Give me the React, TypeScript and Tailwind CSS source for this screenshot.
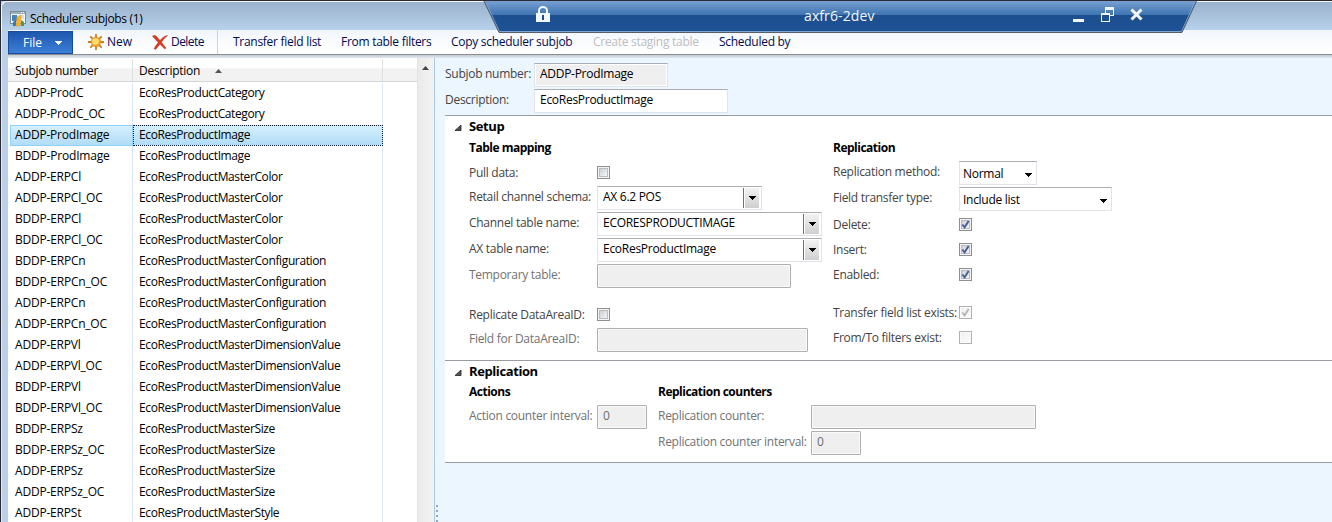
import React from "react";

const rows: [string, string][] = [
  ["ADDP-ProdC", "EcoResProductCategory"],
  ["ADDP-ProdC_OC", "EcoResProductCategory"],
  ["ADDP-ProdImage", "EcoResProductImage"],
  ["BDDP-ProdImage", "EcoResProductImage"],
  ["ADDP-ERPCl", "EcoResProductMasterColor"],
  ["ADDP-ERPCl_OC", "EcoResProductMasterColor"],
  ["BDDP-ERPCl", "EcoResProductMasterColor"],
  ["BDDP-ERPCl_OC", "EcoResProductMasterColor"],
  ["BDDP-ERPCn", "EcoResProductMasterConfiguration"],
  ["BDDP-ERPCn_OC", "EcoResProductMasterConfiguration"],
  ["ADDP-ERPCn", "EcoResProductMasterConfiguration"],
  ["ADDP-ERPCn_OC", "EcoResProductMasterConfiguration"],
  ["ADDP-ERPVl", "EcoResProductMasterDimensionValue"],
  ["ADDP-ERPVl_OC", "EcoResProductMasterDimensionValue"],
  ["BDDP-ERPVl", "EcoResProductMasterDimensionValue"],
  ["BDDP-ERPVl_OC", "EcoResProductMasterDimensionValue"],
  ["BDDP-ERPSz", "EcoResProductMasterSize"],
  ["BDDP-ERPSz_OC", "EcoResProductMasterSize"],
  ["ADDP-ERPSz", "EcoResProductMasterSize"],
  ["ADDP-ERPSz_OC", "EcoResProductMasterSize"],
  ["ADDP-ERPSt", "EcoResProductMasterStyle"],
];

function AppIcon() {
  return (
    <svg width="16" height="16" viewBox="0 0 16 16">
      <rect x="0.5" y="0.5" width="15" height="12" fill="#f3f6f8" stroke="#7c8a96" />
      <rect x="1" y="1" width="14" height="2" fill="#9fb0bd" />
      <path d="M11 1.5h1M13 1.5h1" stroke="#fff" />
      <rect x="2" y="4" width="5" height="6" fill="#3f86c0" />
      <path d="M9 5h5M10 7h4" stroke="#b8c4cc" />
      <path d="M3 15V11l3-2v6z" fill="#2d79bd" />
      <path d="M6 15l1-9 4-2-1 11z" fill="#f5b21b" stroke="#e8912b" strokeWidth=".5" />
      <path d="M11 15V9l3 2v4z" fill="#4f9b38" />
    </svg>
  );
}

function SunIcon() {
  return (
    <svg width="16" height="16" viewBox="0 0 16 16">
      <path d="M8 0v16M0 8h16M2.3 2.3l11.4 11.4M13.7 2.3L2.3 13.7" stroke="#c87e1d" strokeWidth="1.8" />
      <circle cx="8" cy="8" r="4.8" fill="#f0a32b" stroke="#d98d20" strokeWidth=".6" />
      <circle cx="7.5" cy="7.5" r="3.3" fill="#ffdc6b" />
    </svg>
  );
}

function DeleteIcon() {
  return (
    <svg width="16" height="15" viewBox="0 0 16 15">
      <path d="M0.5 1.2C2 0 3.500 0.300 4.500 1.500L8 5.500C10 3 12.500 0.900 15.500 0.500C13 2.500 10.800 5 9.500 7.400L14 13L12.800 14L8 9.300C6.500 11 5 12.800 3.800 14.300L2 13.700C3.200 11.500 4.800 9.200 6.300 7.400Z" fill="#dd3a1c" stroke="#a93222" strokeWidth=".5" />
    </svg>
  );
}

function Down({ className = "" }: { className?: string }) {
  return (
    <svg width="8" height="4" viewBox="0 0 8 4" className={className} shapeRendering="crispEdges">
      <path d="M0 0h8L4 4z" fill="currentColor" />
    </svg>
  );
}

function Check({ on = false, disabled = false }: { on?: boolean; disabled?: boolean }) {
  return (
    <span
      className={
        "flex h-[13px] w-[13px] shrink-0 border p-px " +
        (disabled ? "border-[#b1b1b1] bg-[#fafafa]" : "border-[#8e8f8f] bg-[#f4f4f4]")
      }
    >
      <span
        className={
          "flex h-[9px] w-[9px] " +
          (disabled
            ? "bg-linear-to-br from-[#f0f0f0] to-[#fbfbfb]"
            : "border border-[#b9bdc4] bg-linear-to-br from-[#cbcfd5] to-[#f6f6f6]")
        }
      >
        {on && (
          <svg width="9" height="9" viewBox="0 0 9 9" className={disabled ? "shrink-0" : "-m-px shrink-0"}>
            <path d="M1.300 4.500L3.600 7.300L7.600 0.900" fill="none" stroke={disabled ? "#b5b5b5" : "#4a5f97"} strokeWidth="1.9" />
          </svg>
        )}
      </span>
    </span>
  );
}

type FieldProps = { w: string; value?: string; kind?: "edit" | "readonly" | "disabled" | "lookup" | "select" };

function Field({ w, value = "", kind = "edit" }: FieldProps) {
  const look =
    kind === "disabled"
      ? "border-[#afafaf] bg-[#efefef] text-[#6d6d6d] shadow-[inset_0_0_0_1px_#fafafa] rounded-[1px]"
      : kind === "readonly"
        ? "border-[#e2e3ea] border-t-[#abadb3] bg-[#efefef] text-black shadow-[inset_0_0_0_1px_#fff]"
        : "border-[#e2e3ea] border-t-[#abadb3] bg-white text-black";
  return (
    <div className={"flex h-6 shrink-0 border " + w + " " + look}>
      <span className={"flex-1 whitespace-pre " + (kind === "select" ? "pt-[4px] pl-[3px]" : "pl-[5px] pt-[2px]")}>
        {value}
      </span>
      {kind === "lookup" && (
        <span className="my-px mr-px flex w-[17px] border-l border-[#6f6f6f] pr-px pl-px">
          <span className="flex flex-1 items-center justify-center bg-linear-to-b from-[#f3f3f3] to-[#cfcfcf]">
            <Down />
          </span>
        </span>
      )}
      {kind === "select" && <Down className="mt-[11px] mr-1" />}
    </div>
  );
}

function Row({
  label,
  lw,
  className,
  dim = false,
  check = false,
  children,
}: {
  label: string;
  lw: string;
  className: string;
  dim?: boolean;
  check?: boolean;
  children?: React.ReactNode;
}) {
  return (
    <div className={"flex items-center " + className}>
      <span
        className={
          "shrink-0 whitespace-nowrap " + (check ? "mt-px " : "-mt-[2px] ") + lw + (dim ? " text-[#727272]" : " text-[#444]")
        }
      >
        {label}
      </span>
      {children}
    </div>
  );
}

function SectionTitle({ children }: { children: React.ReactNode }) {
  return (
    <div className="flex h-[22px] items-center pb-[2px] pl-[10px] text-[13px] font-bold tracking-[-0.4px]">
      <svg width="7" height="6" viewBox="0 0 7 6" className="mt-[3px] mr-[7px]">
        <path d="M6 0v5.500H0z" fill="#555" stroke="#222" strokeWidth=".8" />
      </svg>
      <span>{children}</span>
    </div>
  );
}

function RemoteBar() {
  return (
    <div className="absolute -top-px left-[482px] h-[33px] w-[715px]">
      <svg width="715" height="33" viewBox="0 0 715 33" className="absolute inset-0">
        <defs>
          <linearGradient id="bar" x1="0" y1="0" x2="0" y2="1">
            <stop offset="0" stopColor="#7da3d3" />
            <stop offset=".46" stopColor="#3d75b1" />
            <stop offset=".46" stopColor="#1d4f8f" />
            <stop offset="1" stopColor="#1d5294" />
          </linearGradient>
        </defs>
        <path d="M0 0H714L699 32H16Z" fill="url(#bar)" />
        <path d="M1.500 0.500H713" stroke="#6687bd" />
        <path d="M1.500 0L16.500 31.500H698.500L713 0" fill="none" stroke="#7fa3d0" />
        <path d="M0.500 0L16 32.500H699L714 0" fill="none" stroke="#555e6b" />
      </svg>
      <div className="relative flex h-[31px] items-center text-[#f2f7ff]">
        <svg width="14" height="16" viewBox="0 0 14 16" className="mt-[-3px] ml-[53px]">
          <path d="M3 7V4.500a4 3.500 0 0 1 8 0V7" fill="none" stroke="#f2f7ff" strokeWidth="2" />
          <rect y="7" width="14" height="9" fill="#f2f7ff" />
          <rect x="6" y="9" width="2" height="5" fill="#1d4f8f" />
        </svg>
        <span className="ml-[254px] w-[72px] text-[14px] tracking-[0.1px] whitespace-nowrap">axfr6-2dev</span>
        <svg width="70" height="16" viewBox="0 0 70 16" className="mt-[-2px] ml-[197px]" shapeRendering="crispEdges">
          <rect x="0" y="12" width="11" height="3" fill="#f2f7ff" />
          <path d="M32.500 6V2M40.500 2V8.500H37" fill="none" stroke="#f2f7ff" strokeWidth="1" />
          <path d="M32 0h9v3h-9z" fill="#f2f7ff" />
          <path d="M28.500 6.500h8v8h-8zM28 7.500h9" fill="none" stroke="#f2f7ff" strokeWidth="1" />
          <path d="M58.500 2.500L68.500 12.500M68.500 2.500L58.500 12.500" stroke="#f2f7ff" strokeWidth="3" shapeRendering="auto" />
        </svg>
      </div>
    </div>
  );
}

export default function App() {
  return (
    <div className="relative flex h-[522px] w-[1332px] flex-col overflow-hidden border-t border-l border-[#2b2a33] bg-[#bad0e8] font-['Open_Sans','Noto_Sans',sans-serif] text-[12px] leading-4 tracking-[-0.28px] text-black">
      <div className="flex h-[29px] shrink-0 items-center rounded-tl-md border-t border-l border-[#f4f8fc] bg-linear-to-b from-[#9ab2cd] to-[#b8d1ea] pt-[5px] pl-2">
        <AppIcon />
        <span className="ml-1 tracking-[-0.35px]">Scheduler subjobs (1)</span>
      </div>
      <div className="flex min-h-0 flex-1 flex-col border-l border-[#e0ebf6] pl-[6px]">
        <div className="flex h-[25px] shrink-0 border-b border-[#8b8d93] bg-linear-to-b from-[#f0f5fc] via-[#fbfcfe] to-white text-[#000b52]">
          <div className="mt-px flex w-[65px] items-center border border-[#164c9c] bg-linear-to-b from-[#1f56ad] to-[#3c80d8] pt-px pl-[14px] text-white">
            <span className="w-[31px] tracking-normal">File</span>
            <Down />
          </div>
          <div className="ml-[15px] flex w-[64px] items-center gap-[3px]">
            <SunIcon />
            <span className="tracking-normal">New</span>
          </div>
          <div className="flex w-[66px] items-center gap-[3px] border-r border-[#cfd3da]">
            <DeleteIcon />
            <span className="tracking-[-0.55px]">Delete</span>
          </div>
          <div className="flex items-center pl-[15px] whitespace-nowrap">
            <span className="w-[108px]">Transfer field list</span>
            <span className="w-[110px]">From table filters</span>
            <span className="w-[142px]">Copy scheduler subjob</span>
            <span className="w-[126px] text-[#bdbdc0]">Create staging table</span>
            <span>Scheduled by</span>
          </div>
        </div>
        <div className="h-[3px] shrink-0 bg-linear-to-b from-[#c4ccd5] to-[#dfe7ef]" />
        <div className="flex min-h-0 flex-1">
          <div className="flex w-[409px] shrink-0 flex-col bg-white">
            <div className="mt-px flex h-[23px] shrink-0 border-b border-[#d5d5d5] bg-linear-to-b from-white from-40% to-[#f2f2f2] to-45%">
              <div className="flex w-[125px] items-center border-r border-[#dedfe1] pt-[2px] pl-[7px]">Subjob number</div>
              <div className="flex w-[250px] items-center border-r border-[#dedfe1] pt-[2px] pl-[6px]">
                <span className="w-[76px]">Description</span>
                <svg width="7" height="4" viewBox="0 0 7 4">
                  <path d="M0 4h7L3.500 0z" fill="#555" />
                </svg>
              </div>
            </div>
            <div className="flex flex-col pt-px">
              {rows.map(([id, d], i) => (
                <div key={i} className="flex h-[21px] shrink-0">
                  <div
                    className={
                      "flex items-center pb-px tracking-[-0.2px] " +
                      (i === 2
                        ? "ml-[2px] w-[123px] border border-[#8cd3f5] bg-linear-to-b from-[#d6effb] to-[#b0dcf8] pl-[4px]"
                        : "w-[125px] border-r border-[#dbe8f5] pl-[7px]")
                    }
                  >
                    {id}
                  </div>
                  <div
                    className={
                      "flex w-[250px] items-center pb-px tracking-[-0.38px] " +
                      (i === 2
                        ? "border border-dotted border-[#10203a] bg-linear-to-b from-[#d6effb] to-[#b0dcf8] pl-[5px]"
                        : "border-r border-[#dbe8f5] pl-[6px]")
                    }
                  >
                    {d}
                  </div>
                </div>
              ))}
            </div>
          </div>
          <div className="flex w-[17px] shrink-0 justify-center border-l border-[#e3e3e3] bg-linear-to-r from-[#eaeaea] to-[#f3f3f3] pt-[8px] pr-px">
            <svg width="7" height="4" viewBox="0 0 7 4">
              <path d="M0 4h7L3.500 0z" fill="#444" />
            </svg>
          </div>
          <div className="flex w-[11px] shrink-0 flex-col justify-end border-l border-[#a9c9e2] bg-[#ebf6ff] pl-px">
            {[0, 1, 2, 3].map((i) => (
              <span key={i} className="mb-[3px] h-[2px] w-[2px] shrink-0 bg-[#9aa6b4] last:mb-0" />
            ))}
          </div>
          <div className="flex min-w-0 flex-1 flex-col bg-[#ebf6ff]">
            <Row label="Subjob number:" lw="w-[89px]" className="mt-[5px] h-6">
              <Field w="w-[134px]" value="ADDP-ProdImage" kind="readonly" />
            </Row>
            <Row label="Description:" lw="w-[89px]" className="mt-[2px] mb-[2px] h-6">
              <Field w="w-[194px]" value="EcoResProductImage" />
            </Row>
            <div className="h-[245px] shrink-0 border-t border-[#999da3] bg-white">
              <SectionTitle>Setup</SectionTitle>
              <div className="flex pl-6">
                <div className="flex w-[364px] flex-col">
                  <div className="h-[22px] pt-[2px] font-bold tracking-[-0.5px]">Table mapping</div>
                  <Row label="Pull data:" lw="w-[128px]" className="mt-[6px] h-[13px]" check>
                    <Check />
                  </Row>
                  <Row label="Retail channel schema:" lw="w-[128px]" className="mt-[7px] h-6">
                    <Field w="w-[165px]" value="AX 6.2 POS" kind="lookup" />
                  </Row>
                  <Row label="Channel table name:" lw="w-[128px]" className="mt-[2px] h-6">
                    <Field w="w-[225px]" value="ECORESPRODUCTIMAGE" kind="lookup" />
                  </Row>
                  <Row label="AX table name:" lw="w-[128px]" className="mt-[2px] h-6">
                    <Field w="w-[225px]" value="EcoResProductImage" kind="lookup" />
                  </Row>
                  <Row label="Temporary table:" lw="w-[128px]" className="mt-[2px] h-6" dim>
                    <Field w="w-[194px]" kind="disabled" />
                  </Row>
                  <Row label="Replicate DataAreaID:" lw="w-[128px]" className="mt-[20px] h-[13px]" check>
                    <Check />
                  </Row>
                  <Row label="Field for DataAreaID:" lw="w-[128px]" className="mt-[7px] h-6" dim>
                    <Field w="w-[211px]" kind="disabled" />
                  </Row>
                </div>
                <div className="flex flex-col">
                  <div className="h-[22px] pt-[2px] font-bold tracking-[-0.5px]">Replication</div>
                  <Row label="Replication method:" lw="w-[126px]" className="mt-px h-6">
                    <Field w="w-[78px]" value="Normal" kind="select" />
                  </Row>
                  <Row label="Field transfer type:" lw="w-[126px]" className="mt-[2px] h-6">
                    <Field w="w-[153px]" value="Include list" kind="select" />
                  </Row>
                  <Row label="Delete:" lw="w-[126px]" className="mt-[7px] h-[13px]" check>
                    <Check on />
                  </Row>
                  <Row label="Insert:" lw="w-[126px]" className="mt-[12px] h-[13px]" check>
                    <Check on />
                  </Row>
                  <Row label="Enabled:" lw="w-[126px]" className="mt-[12px] h-[13px]" check>
                    <Check on />
                  </Row>
                  <Row label="Transfer field list exists:" lw="w-[126px]" className="mt-[25px] h-[13px]" check>
                    <Check on disabled />
                  </Row>
                  <Row label="From/To filters exist:" lw="w-[126px]" className="mt-[12px] h-[13px]" check>
                    <Check disabled />
                  </Row>
                </div>
              </div>
            </div>
            <div className="h-[103px] shrink-0 border-y border-[#999da3] bg-white">
              <SectionTitle>Replication</SectionTitle>
              <div className="flex pl-6">
                <div className="flex w-[189px] flex-col">
                  <div className="h-[22px] pt-px font-bold tracking-[-0.5px]">Actions</div>
                  <Row label="Action counter interval:" lw="w-[128px]" className="h-6" dim>
                    <Field w="w-[50px]" value="0" kind="disabled" />
                  </Row>
                </div>
                <div className="flex flex-col">
                  <div className="h-[22px] pt-px font-bold tracking-[-0.5px]">Replication counters</div>
                  <Row label="Replication counter:" lw="w-[153px]" className="h-6" dim>
                    <Field w="w-[225px]" kind="disabled" />
                  </Row>
                  <Row label="Replication counter interval:" lw="w-[153px]" className="mt-[2px] h-6" dim>
                    <Field w="w-[50px]" value="0" kind="disabled" />
                  </Row>
                </div>
              </div>
            </div>
          </div>
        </div>
      </div>
      <RemoteBar />
    </div>
  );
}
